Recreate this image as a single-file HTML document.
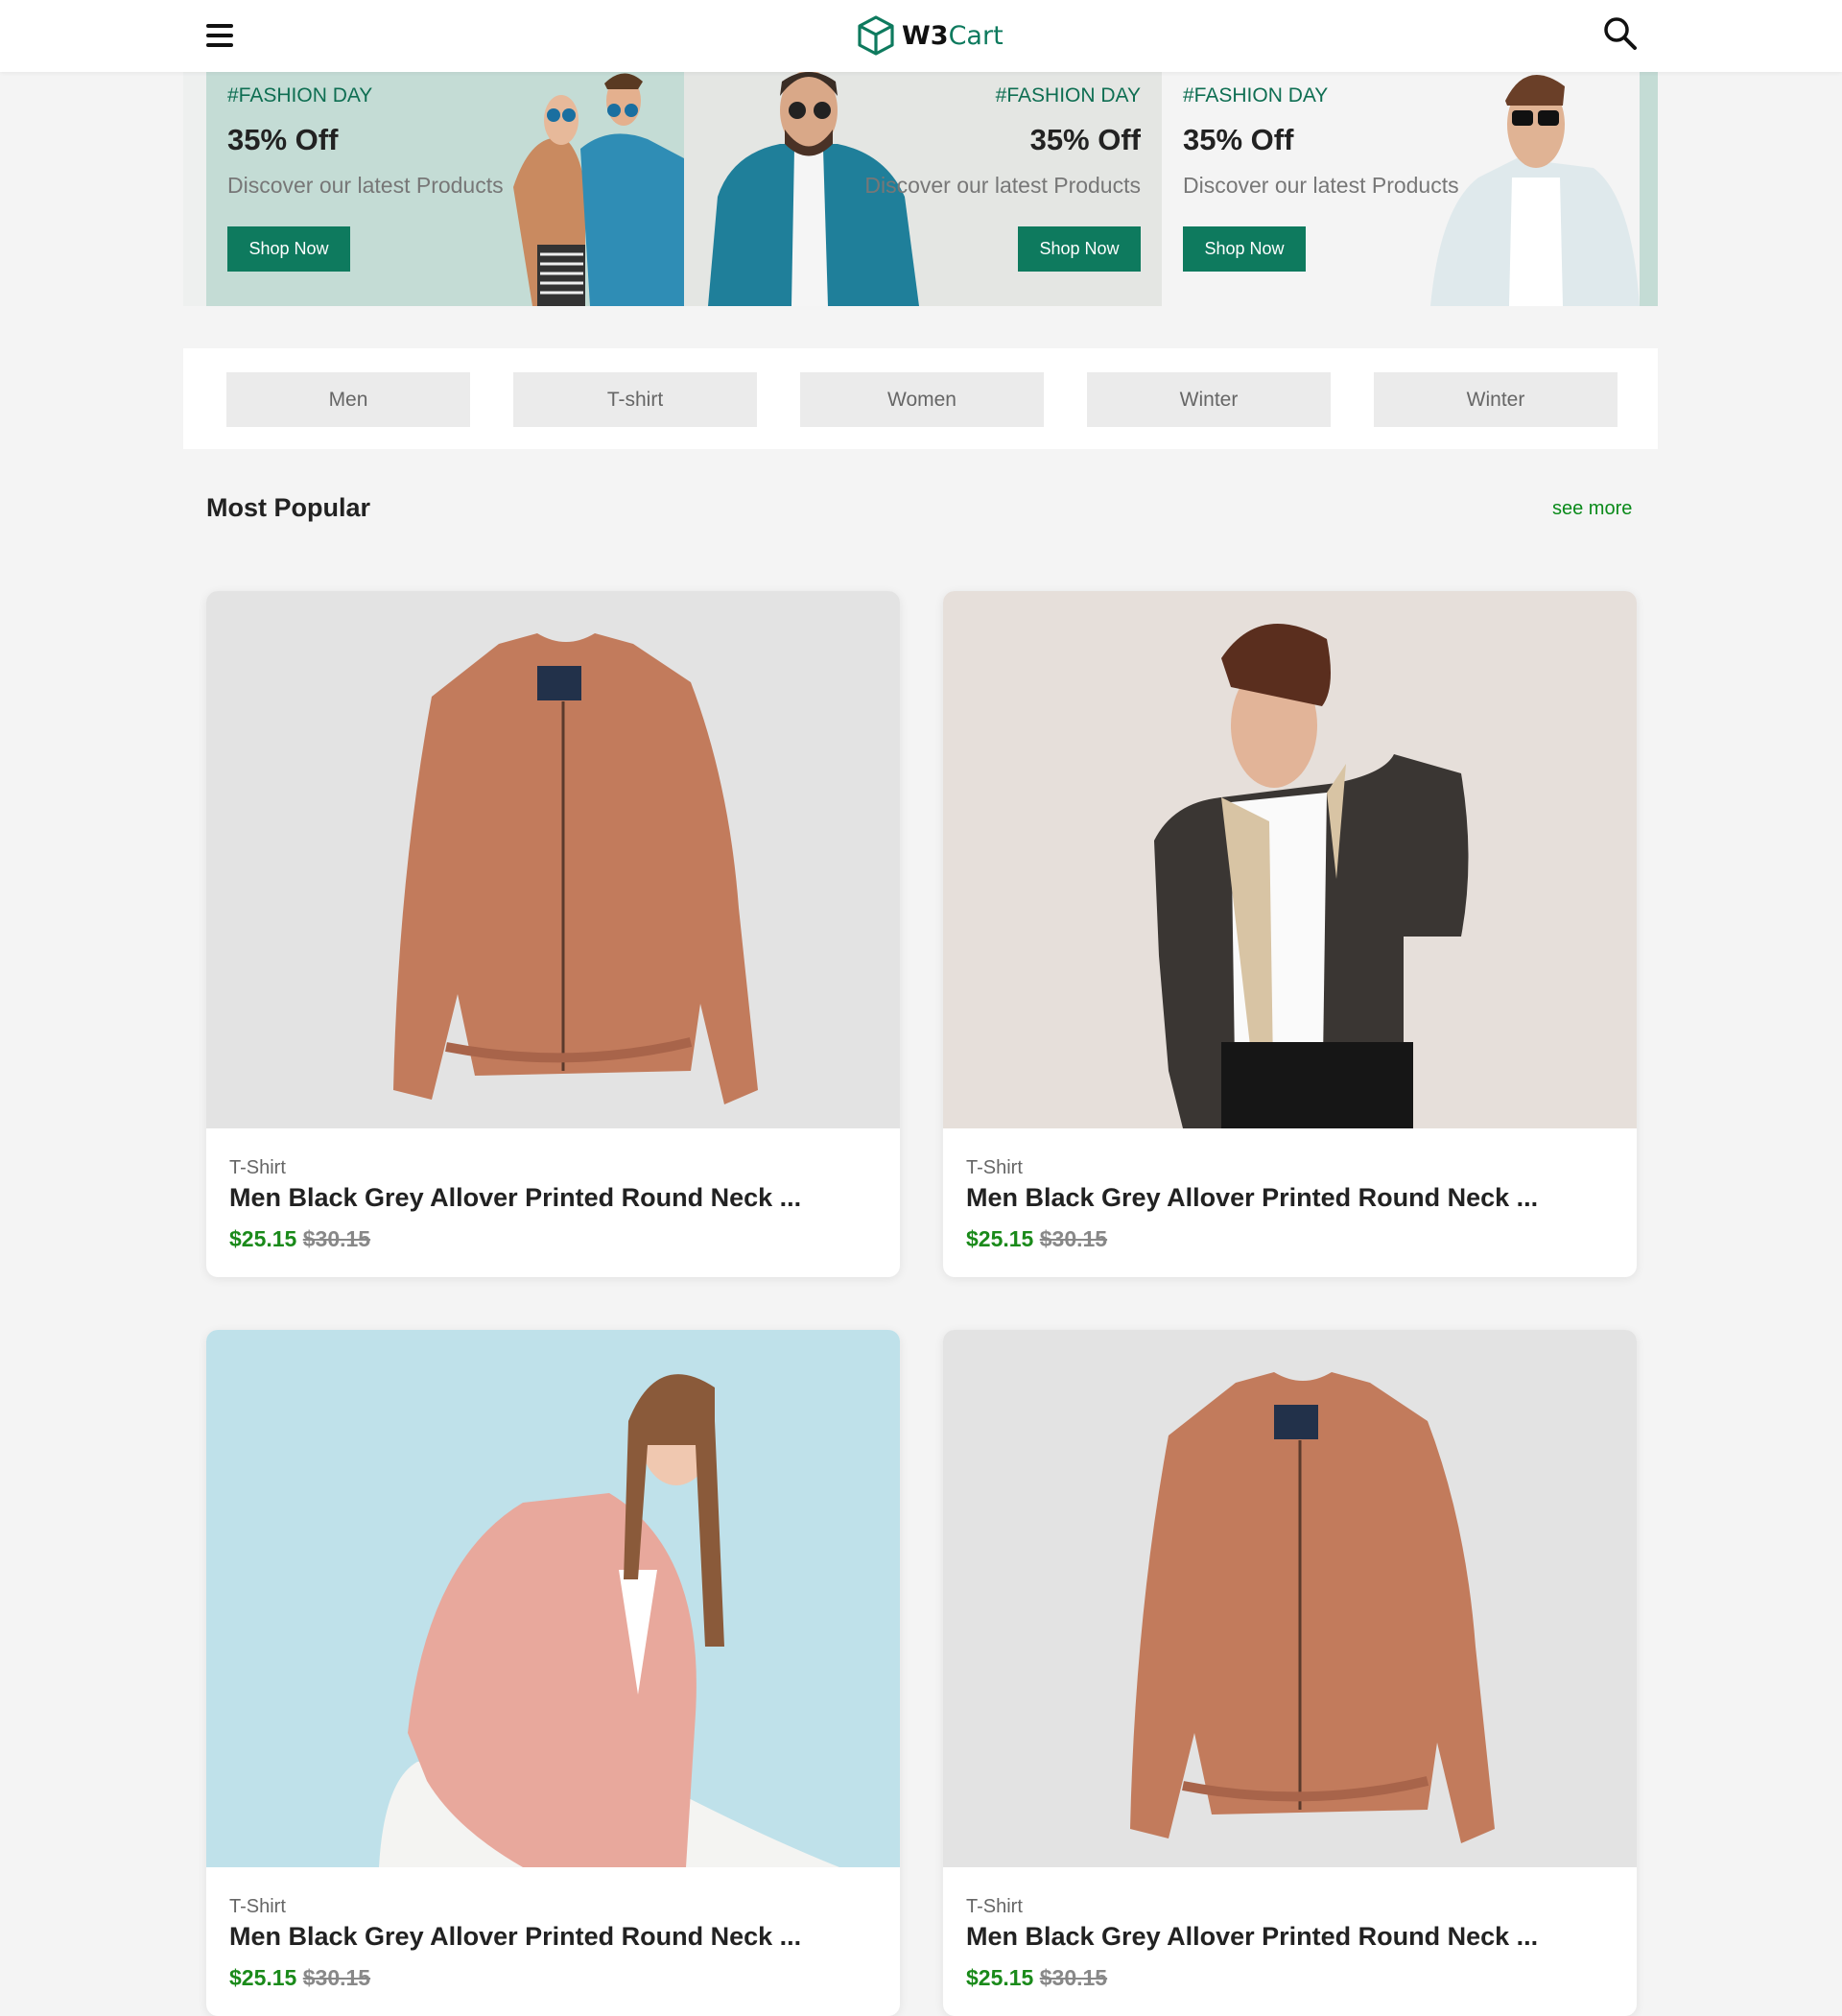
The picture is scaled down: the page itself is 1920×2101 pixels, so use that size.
<!DOCTYPE html>
<html><head><meta charset="utf-8">
<style>
*{margin:0;padding:0;box-sizing:border-box}
body{width:1920px;height:2056px;overflow:hidden;background:#f4f4f4;font-family:"Liberation Sans",Arial,sans-serif;position:relative}
.hdr{position:absolute;left:0;top:0;width:1920px;height:75px;background:#fff;box-shadow:0 1px 4px rgba(0,0,0,.06);z-index:5}
.abs{position:absolute}
.banner{position:absolute;left:191px;top:75px;width:1537px;height:244px;background:#f0f0f0;overflow:hidden}
.slide{position:absolute;top:0;height:244px;overflow:hidden}
.tag{position:absolute;top:88px;font-size:21px;color:#0e6e52}
.off{position:absolute;top:128px;font-size:31px;font-weight:bold;color:#222}
.disc{position:absolute;top:180px;font-size:23px;color:#777}
.btn{position:absolute;top:161px;width:128px;height:47px;background:#0e7a5e;color:#fff;font-size:18px;line-height:47px;text-align:center}
.cats{position:absolute;left:191px;top:363px;width:1537px;height:105px;background:#fff}
.cat{position:absolute;top:25px;width:254px;height:57px;background:#ebebeb;color:#666;font-size:21px;line-height:57px;text-align:center}
.card{position:absolute;width:723px;background:#fff;border-radius:12px;overflow:hidden;box-shadow:0 2px 10px rgba(0,0,0,.08)}
.img{width:723px;height:560px;display:block}
.t1{position:absolute;left:24px;font-size:20px;color:#666}
.t2{position:absolute;left:24px;font-size:27px;font-weight:bold;color:#222}
.t3{position:absolute;left:24px;font-size:23px;font-weight:bold;color:#1a8a1a}
.t3 s{color:#888}
</style></head><body>
<div class="hdr">
  <div class="abs" style="left:215px;top:25px;width:28px;height:4px;background:#111;border-radius:2px"></div>
  <div class="abs" style="left:215px;top:35px;width:28px;height:4px;background:#111;border-radius:2px"></div>
  <div class="abs" style="left:215px;top:45px;width:28px;height:4px;background:#111;border-radius:2px"></div>
  <svg class="abs" style="left:892px;top:15px" width="42" height="44" viewBox="0 0 42 44"><g fill="none" stroke="#0e7a5e" stroke-width="3.2" stroke-linejoin="round"><path d="M21 3 L38 12 L38 32 L21 41 L4 32 L4 12 Z"/><path d="M4 12 L21 21 L38 12 M21 21 L21 41"/></g></svg>
  <div class="abs" style="left:940px;top:21px;font-size:27px;line-height:34px;font-family:'DejaVu Sans','Liberation Sans',sans-serif"><b style="color:#111">W3</b><span style="color:#0e7a5e">Cart</span></div>
  <svg class="abs" style="left:1670px;top:16px" width="38" height="38" viewBox="0 0 38 38"><circle cx="15" cy="15" r="11" fill="none" stroke="#111" stroke-width="3.5"/><path d="M23 23 L34 34" stroke="#111" stroke-width="4" stroke-linecap="round"/></svg>
</div>

<div class="banner">
  <div class="slide" style="left:0;width:24px;background:#eef0ef"></div>
  <div class="slide" style="left:24px;width:498px;background:#c4dcd5">
    <svg class="abs" style="left:300px;top:0" width="198" height="244" viewBox="0 0 198 244">
      <path d="M20 120 Q40 60 75 70 Q100 95 95 170 L95 244 L40 244 Z" fill="#c98a60"/>
      <rect x="45" y="180" width="50" height="64" fill="#333"/>
      <path d="M48 190 h45 M48 200 h45 M48 210 h45 M48 220 h45 M48 230 h45" stroke="#eee" stroke-width="3"/>
      <ellipse cx="70" cy="50" rx="18" ry="26" fill="#e7b99a"/>
      <path d="M90 80 Q120 55 160 70 L198 90 L198 244 L100 244 Z" fill="#2f8db5"/>
      <ellipse cx="135" cy="30" rx="18" ry="26" fill="#e4b08e"/>
      <path d="M115 12 Q135 -8 155 10 L150 18 L118 18 Z" fill="#5a3a22"/>
      <circle cx="125" cy="40" r="7" fill="#1a6fa0"/><circle cx="143" cy="40" r="7" fill="#1a6fa0"/>
      <circle cx="62" cy="45" r="7" fill="#1a6fa0"/><circle cx="78" cy="45" r="7" fill="#1a6fa0"/>
    </svg>
    <div class="tag" style="left:22px;top:13px">#FASHION DAY</div>
    <div class="off" style="left:22px;top:53px">35% Off</div>
    <div class="disc" style="left:22px;top:105px">Discover our latest Products</div>
    <div class="btn" style="left:22px">Shop Now</div>
  </div>
  <div class="slide" style="left:522px;width:498px;background:#e4e6e3">
    <svg class="abs" style="left:20px;top:0" width="240" height="244" viewBox="0 0 240 244">
      <path d="M15 130 Q30 85 80 75 L140 75 Q190 85 210 130 L225 244 L5 244 Z" fill="#1f7f9a"/>
      <path d="M95 80 L125 80 L130 244 L92 244 Z" fill="#f5f5f5"/>
      <ellipse cx="110" cy="40" rx="30" ry="42" fill="#d9a888"/>
      <path d="M80 25 Q110 -15 140 25 L138 10 Q110 -10 82 10 Z" fill="#3a2d25"/>
      <path d="M85 60 Q110 95 135 60 L135 75 Q110 100 85 75 Z" fill="#4a3226"/>
      <circle cx="98" cy="40" r="9" fill="#222"/><circle cx="124" cy="40" r="9" fill="#222"/>
    </svg>
    <div class="tag" style="right:22px;top:13px">#FASHION DAY</div>
    <div class="off" style="right:22px;top:53px">35% Off</div>
    <div class="disc" style="right:22px;top:105px">Discover our latest Products</div>
    <div class="btn" style="right:22px">Shop Now</div>
  </div>
  <div class="slide" style="left:1020px;width:498px;background:#f4f4f4">
    <svg class="abs" style="left:270px;top:0" width="228" height="244" viewBox="0 0 228 244">
      <path d="M10 244 Q20 140 60 110 L100 90 L180 100 Q220 130 228 244 Z" fill="#dfe9ec"/>
      <path d="M95 110 L145 110 L148 244 L92 244 Z" fill="#fff"/>
      <ellipse cx="120" cy="55" rx="30" ry="45" fill="#e0b394"/>
      <path d="M88 30 Q110 -15 150 15 L148 35 L90 35 Z" fill="#6a3f28"/>
      <rect x="95" y="40" width="22" height="16" rx="4" fill="#111"/><rect x="122" y="40" width="22" height="16" rx="4" fill="#111"/>
    </svg>
    <div class="tag" style="left:22px;top:13px">#FASHION DAY</div>
    <div class="off" style="left:22px;top:53px">35% Off</div>
    <div class="disc" style="left:22px;top:105px">Discover our latest Products</div>
    <div class="btn" style="left:22px">Shop Now</div>
  </div>
  <div class="slide" style="left:1518px;width:19px;background:#c4dcd5"></div>
</div>

<div class="cats">
  <div class="cat" style="left:45px">Men</div>
  <div class="cat" style="left:344px">T-shirt</div>
  <div class="cat" style="left:643px">Women</div>
  <div class="cat" style="left:942px">Winter</div>
  <div class="cat" style="left:1241px">Winter</div>
</div>

<div class="abs" style="left:215px;top:514px;font-size:27px;font-weight:bold;color:#222">Most Popular</div>
<div class="abs" style="left:1618px;top:519px;font-size:20px;color:#0a8a1a">see more</div>

<div class="card" style="left:215px;top:616px;height:715px">
  <svg class="img" viewBox="0 0 723 560"><rect width="723" height="560" fill="#e3e3e3"/>
    <path d="M305 55 L345 44 Q375 62 405 44 L445 55 L505 95 Q545 200 555 330 L575 520 L540 535 L515 430 L505 500 L280 505 L262 420 L235 530 L195 520 Q200 300 235 110 Z" fill="#c27b5c"/>
    <rect x="345" y="78" width="46" height="36" fill="#22314a"/>
    <path d="M372 115 L372 500" stroke="#5a3a2c" stroke-width="3"/>
    <path d="M250 475 Q380 500 505 470" stroke="#a8644a" stroke-width="10" fill="none"/>
  </svg>
  <div class="t1" style="top:590px">T-Shirt</div>
  <div class="t2" style="top:617px">Men Black Grey Allover Printed Round Neck ...</div>
  <div class="t3" style="top:662px">$25.15 <s>$30.15</s></div>
</div>
<div class="card" style="left:983px;top:616px;height:715px">
  <svg class="img" viewBox="0 0 723 560"><rect width="723" height="560" fill="#e6dfda"/>
    <path d="M220 260 Q240 220 290 215 L410 200 Q460 190 470 170 L540 190 Q555 280 540 360 L480 360 L480 560 L250 560 L235 500 L225 380 Z" fill="#3a3633"/>
    <path d="M300 220 L400 210 L395 560 L305 560 Z" fill="#fafafa"/>
    <path d="M290 215 L340 240 L345 560 L330 560 Z M400 210 L420 180 L410 300 Z" fill="#d8c4a4"/>
    <rect x="290" y="470" width="200" height="90" fill="#161616"/>
    <ellipse cx="345" cy="140" rx="45" ry="65" fill="#e2b498"/>
    <path d="M290 70 Q330 10 400 50 Q410 100 395 120 L300 100 Z" fill="#5a2e1e"/>
  </svg>
  <div class="t1" style="top:590px">T-Shirt</div>
  <div class="t2" style="top:617px">Men Black Grey Allover Printed Round Neck ...</div>
  <div class="t3" style="top:662px">$25.15 <s>$30.15</s></div>
</div>
<div class="card" style="left:215px;top:1386px;height:715px">
  <svg class="img" viewBox="0 0 723 560"><rect width="723" height="560" fill="#bfe1ea"/>
    <path d="M180 560 Q185 470 220 450 L430 450 Q560 520 660 560 Z" fill="#f4f4f2"/>
    <path d="M210 420 Q230 240 330 180 L420 170 Q520 230 510 400 L500 560 L330 560 Q260 520 230 470 Z" fill="#e8a89c"/>
    <path d="M430 250 L470 250 L450 380 Z" fill="#fff"/>
    <ellipse cx="490" cy="110" rx="38" ry="52" fill="#f0c8b0"/>
    <path d="M440 95 Q470 20 530 60 L530 95 L540 330 L520 330 L510 120 L460 120 L450 260 L435 260 Z" fill="#8a5a3a"/>
  </svg>
  <div class="t1" style="top:590px">T-Shirt</div>
  <div class="t2" style="top:617px">Men Black Grey Allover Printed Round Neck ...</div>
  <div class="t3" style="top:662px">$25.15 <s>$30.15</s></div>
</div>
<div class="card" style="left:983px;top:1386px;height:715px">
  <svg class="img" viewBox="0 0 723 560"><rect width="723" height="560" fill="#e3e3e3"/>
    <path d="M305 55 L345 44 Q375 62 405 44 L445 55 L505 95 Q545 200 555 330 L575 520 L540 535 L515 430 L505 500 L280 505 L262 420 L235 530 L195 520 Q200 300 235 110 Z" fill="#c27b5c"/>
    <rect x="345" y="78" width="46" height="36" fill="#22314a"/>
    <path d="M372 115 L372 500" stroke="#5a3a2c" stroke-width="3"/>
    <path d="M250 475 Q380 500 505 470" stroke="#a8644a" stroke-width="10" fill="none"/>
  </svg>
  <div class="t1" style="top:590px">T-Shirt</div>
  <div class="t2" style="top:617px">Men Black Grey Allover Printed Round Neck ...</div>
  <div class="t3" style="top:662px">$25.15 <s>$30.15</s></div>
</div>
</body></html>
